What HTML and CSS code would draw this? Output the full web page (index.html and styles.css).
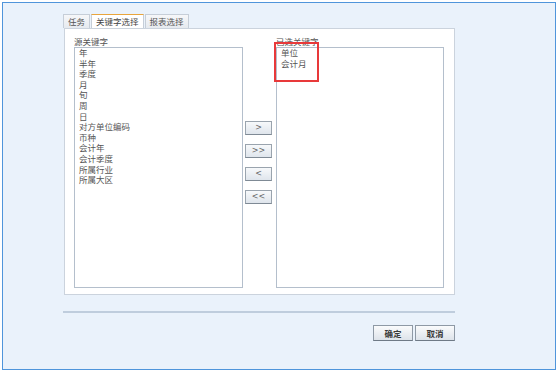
FILE: index.html
```html
<!DOCTYPE html>
<html lang="zh">
<head>
    <meta charset="UTF-8">
    <title>关键字选择</title>
    <link rel="stylesheet" href="styles.css">
</head>
<body>
    <div class="frame">
        <div class="tabs">
            <div class="tab">任务</div>
            <div class="tab active">关键字选择</div>
            <div class="tab">报表选择</div>
        </div>
        <div class="panel">
            <div class="column">
                <div class="list-label">源关键字</div>
                <div class="list">
                    <div>年</div>
                    <div>半年</div>
                    <div>季度</div>
                    <div>月</div>
                    <div>旬</div>
                    <div>周</div>
                    <div>日</div>
                    <div>对方单位编码</div>
                    <div>币种</div>
                    <div>会计年</div>
                    <div>会计季度</div>
                    <div>所属行业</div>
                    <div>所属大区</div>
                </div>
            </div>
            <div class="movers">
                <button class="mover">&gt;</button>
                <button class="mover">&gt;&gt;</button>
                <button class="mover">&lt;</button>
                <button class="mover">&lt;&lt;</button>
            </div>
            <div class="column right">
                <div class="list-label">已选关键字</div>
                <div class="list">
                    <div>单位</div>
                    <div>会计月</div>
                </div>
            </div>
        </div>
        <div class="separator"></div>
        <div class="actions">
            <button class="action">确定</button>
            <button class="action">取消</button>
        </div>
    </div>
    <!-- annotation box drawn over the selected list -->
    <div class="highlight"></div>
</body>
</html>
```

FILE: styles.css
```css
body {
    margin: 0;
    background: white;
    font-family: "Noto Sans CJK SC", "DejaVu Sans", sans-serif;
    position: relative;
}

.frame {
    box-sizing: border-box;
    width: 554px;
    height: 368px;
    margin: 2px;
    border: 1px solid #4f95db;
    background: #eaf2fb;
    padding: 11px 0 0 60px;
}

.tabs {
    display: flex;
    gap: 1px;
    height: 14px;
}
.tab {
    box-sizing: border-box;
    height: 14px;
    padding: 0 4px;
    border: 1px solid #c6ced8;
    border-bottom: none;
    background: linear-gradient(#f6f7f9, #e6eaef);
    color: #555;
    font-size: 8.5px;
    line-height: 13px;
}
.tab.active {
    background: white;
    border-top: 1px solid #e9a53c;
    color: #444;
}

.panel {
    box-sizing: border-box;
    width: 391px;
    height: 267px;
    margin-left: 1px;
    background: white;
    border: 1px solid #cbd3dd;
    padding: 7px 9px 6px 9px;
    display: flex;
}

.column {
    width: 169px;
    display: flex;
    flex-direction: column;
}
.column.right {
    width: 168px;
}
.list-label {
    height: 11px;
    font-size: 8.5px;
    line-height: 11px;
    color: #555;
}
.list {
    flex: 1;
    border: 1px solid #b4bfcc;
    padding: 0 4px;
    font-size: 8.5px;
    line-height: 10.6px;
    color: #555;
}
.list div:first-child {
    margin-top: -1px;
}

.movers {
    width: 27px;
    margin: 0 4px 0 2px;
    display: flex;
    flex-direction: column;
    justify-content: center;
    gap: 9px;
}
.mover {
    box-sizing: border-box;
    width: 27px;
    height: 14px;
    padding: 0;
    border: 1px solid #9aa4ae;
    border-bottom-color: #7f8a95;
    background: linear-gradient(#f7f9fb, #dfe5ec);
    color: #666;
    font-family: "DejaVu Sans", sans-serif;
    font-size: 8px;
    line-height: 12px;
}

.separator {
    width: 392px;
    height: 2px;
    margin-top: 16px;
    background: #bfcddd;
}

.actions {
    width: 391px;
    margin: 12px 0 0 1px;
    display: flex;
    justify-content: flex-end;
    gap: 2px;
}
.action {
    box-sizing: border-box;
    width: 40px;
    height: 16px;
    padding: 0;
    border: 1px solid #8e99a5;
    border-bottom-color: #6f7a86;
    background: linear-gradient(#fafbfc, #dde3ea);
    color: #3a3a3a;
    font-family: "Noto Sans CJK SC", sans-serif;
    font-size: 8.5px;
    font-weight: bold;
    line-height: 14px;
}

.highlight {
    position: absolute;
    left: 274px;
    top: 42px;
    width: 41px;
    height: 36px;
    border: 2px solid #e8393a;
}
```
